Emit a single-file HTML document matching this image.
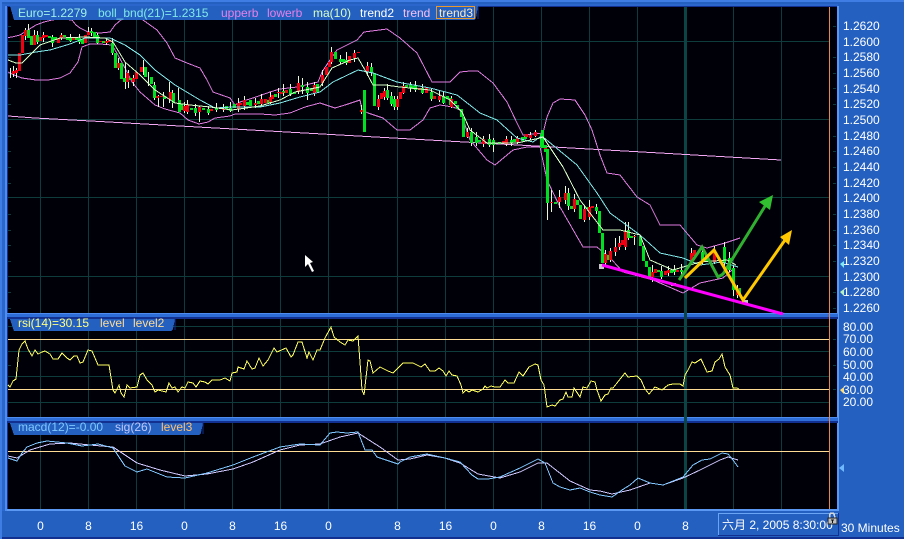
<!DOCTYPE html>
<html><head><meta charset="utf-8"><style>
html,body{margin:0;padding:0;background:#2460c0;width:904px;height:539px;overflow:hidden}
svg{display:block}
text{font-family:"Liberation Sans","Noto Sans CJK SC",sans-serif;font-size:12px}
.c{shape-rendering:crispEdges}
.l{fill:none;shape-rendering:crispEdges}
.a text{fill:#fff}
</style></head><body>
<svg width="904" height="539" viewBox="0 0 904 539" xmlns="http://www.w3.org/2000/svg">
<rect width="904" height="539" fill="#2460c0"/>
<g class="c">
<rect width="904" height="2" fill="#3f7de4"/>
<rect y="537" width="904" height="2" fill="#12308f"/>
<rect x="0" width="2" height="539" fill="#3f7de4"/>
<rect x="2" y="4" width="836" height="507" fill="#2a66cc"/>
<rect x="7" y="6" width="831" height="505" fill="#12308f"/>
<rect x="837" y="6" width="2" height="505" fill="#5a98f4"/>
<rect x="5" y="509" width="834" height="2" fill="#5a98f4"/>
<rect x="5" y="6" width="2" height="505" fill="#4f8cf0"/>
<rect x="8" y="7" width="829" height="306" fill="#000008"/>
<rect x="8" y="319" width="829" height="98" fill="#000008"/>
<rect x="8" y="423" width="829" height="86" fill="#000008"/>
<rect x="7" y="313" width="831" height="1" fill="#4f8cf0"/>
<rect x="7" y="314" width="831" height="3" fill="#2e6cd8"/>
<rect x="7" y="317" width="831" height="2" fill="#12308f"/>
<rect x="7" y="417" width="831" height="1" fill="#4f8cf0"/>
<rect x="7" y="418" width="831" height="3" fill="#2e6cd8"/>
<rect x="7" y="421" width="831" height="2" fill="#12308f"/>
</g>
<!-- grid -->
<path class="l" stroke="#0e3c3c" d="M40.5 7V313M88.5 7V313M136.5 7V313M184.5 7V313M232.5 7V313M280.5 7V313M328.5 7V313M397.5 7V313M445.5 7V313M493.5 7V313M541.5 7V313M589.5 7V313M637.5 7V313M733.5 7V313M781.5 7V313
M40.5 319V417M88.5 319V417M136.5 319V417M184.5 319V417M232.5 319V417M280.5 319V417M328.5 319V417M397.5 319V417M445.5 319V417M493.5 319V417M541.5 319V417M589.5 319V417M637.5 319V417M733.5 319V417M781.5 319V417
M40.5 423V509M88.5 423V509M136.5 423V509M184.5 423V509M232.5 423V509M280.5 423V509M328.5 423V509M397.5 423V509M445.5 423V509M493.5 423V509M541.5 423V509M589.5 423V509M637.5 423V509M733.5 423V509M781.5 423V509
M8 41.5H829M8 119.5H829M8 197.5H829M8 276.5H829M8 326.5H829M8 351.5H829M8 376.5H829M8 402.5H829
M8 26.5H11M8 57.5H11M8 73.5H11M8 88.5H11M8 104.5H11M8 136.5H11M8 151.5H11M8 167.5H11M8 183.5H11M8 214.5H11M8 230.5H11M8 245.5H11M8 261.5H11M8 292.5H11M8 308.5H11M8 339.5H11M8 365.5H11M8 389.5H11
M833 26.5H836M833 57.5H836M833 73.5H836M833 88.5H836M833 104.5H836M833 136.5H836M833 151.5H836M833 167.5H836M833 183.5H836M833 214.5H836M833 230.5H836M833 245.5H836M833 261.5H836M833 292.5H836M833 308.5H836M833 339.5H836M833 365.5H836M833 389.5H836"/>
<rect class="c" x="684" y="7" width="3" height="502" fill="#0a4444"/>
<rect class="c" x="829" y="7" width="1" height="502" fill="#e8854e"/>
<!-- level lines -->
<path class="l" stroke="#ffdc96" d="M8 339.5H829M8 389.5H829M8 451.5H829"/>
<!-- trend line -->
<polyline class="l" stroke="#f4a8f4" points="8,116 35,118 100,121.5 180,126 260,130.5 340,135 420,139.5 500,144 580,148.5 660,153 720,156.5 781,160"/>
<!-- upper band -->
<polyline class="l" stroke="#e07ce0" points="8,37.5 12,37 20,35 28,30 36,25 44,22 52,20 60,19 72,20 76,25 80,28 88,32 100,33 110,32 115,25 122,19 132,14 143,20 157,30 167,43 175,58 187,63 200,68 207,80 213,92 230,98 235,105 240,102 253,98 270,92 280,89 297,87 318,82 322,72 330,60 337,50 357,40 364,32 387,29 400,38 417,53 432,82 450,82 460,72 470,71 478,71 493,83 507,102 517,123 523,135 543,133 547,117 553,103 560,99 575,100 585,115 592,130 600,155 607,173 620,175 637,197 650,205 660,225 680,225 697,245 707,248 725,243 740,238"/>
<!-- lower band -->
<polyline class="l" stroke="#e07ce0" points="8,72 14,75 22,78 36,80 48,80 60,78 70,73 78,62 82,47 90,44 100,44 112,45 118,55 126,70 132,82 140,92 155,105 165,109 180,113 188,120 199,124 208,122 215,118 230,116 235,114 260,114 275,115 290,113 305,107 320,103 335,108 345,105 360,100 362,110 368,113 383,118 397,130 410,130 423,120 430,108 440,105 453,107 460,110 470,140 487,160 495,165 513,150 527,147 540,147 547,180 560,207 583,247 597,247 612,260 623,272 653,280 683,293 700,283 723,278 732,270"/>
<!-- wicks -->
<path class="l" stroke="#e6f8d8" transform="translate(.5 0)" d="M10 68V78M13 66V77M16 68V78M28 24V38M25 28V40M34 30V45M37 31V44M43 32V42M52 35V47M61 33V40M70 34V42M79 34V44M88 27V35M91 28V36M97 33V44M106 38V45M112 38V55M118 58V70M125 63V89M128 70V88M133 75V86M143 60V75M148 72V86M154 82V100M158 95V107M163 92V107M169 82V103M172 90V108M178 88V112M184 102V113M187 100V114M195 104V116M199 106V122M208 106V115M216 103V112M223 104V112M230 102V112M238 98V112M244 96V110M255 98V108M261 94V106M270 92V104M278 88V98M283 84V96M290 84V96M298 76V94M302 78V94M307 82V100M314 82V96M322 70V86M331 47V64M340 55V64M346 52V65M354 50V62M361 105V114M367 62V76M371 63V76M378 95V110M384 88V100M387 84V100M391 92V106M394 96V110M397 96V110M403 82V94M410 82V92M415 81V92M422 84V94M431 88V101M439 90V102M443 92V104M451 96V108M467 128V138M471 128V146M476 132V146M483 136V147M489 134V147M493 138V152M506 136V146M511 136V146M517 136V144M530 132V140M535 130V137M547 203V220M551 190V212M559 190V208M565 186V204M568 188V210M574 194V212M584 205V222M589 200V220M596 204V214M605 250V266M610 248V262M615 238V256M619 236V250M625 222V250M628 222V240M634 235V245M652 265V282M661 266V279M668 266V276M674 265V275M681 264V275M691 248V265M702 248V264M714 246V264M724 242V266M729 252V272M733 266V296M737 285V298"/>
<!-- green bodies -->
<path class="c" fill="none" stroke="#00e020" stroke-width="3" transform="translate(.5 0)" d="M28 30V38M31 36V45M37 35V42M49 36V38M52 37V43M64 35V37M67 37V40M70 38V41M76 38V40M79 38V42M82 39V44M91 31V33M94 32V38M97 35V43M103 41V43M112 43V53M115 53V68M121 63V79M124 78V82M130 78V80M145 67V77M151 77V84M154 85V98M164 96V99M173 93V103M179 100V112M191 108V110M195 108V113M203 108V110M208 109V113M216 108V110M230 108V111M250 100V106M268 100V103M283 91V93M290 89V94M294 92V94M302 85V87M307 87V93M317 84V92M335 52V59M340 59V62M346 60V63M364 90V132M371 67V73M374 73V106M387 90V98M391 96V104M394 99V107M410 85V88M415 85V90M422 88V93M431 92V99M443 96V103M450 98V105M457 105V109M461 109V117M463 117V137M471 132V143M476 137V143M489 139V145M493 140V145M511 140V143M522 137V141M541 134V147M545 145V152M547 149V203M542 130V148M555 202V204M568 193V206M571 206V209M577 200V205M580 205V219M587 207V209M596 207V211M599 211V233M602 233V263M607 255V260M628 230V238M631 236V238M640 236V246M643 246V261M646 261V267M649 267V277M658 270V272M661 271V277M671 270V273M674 269V272M681 270V272M702 252V260M706 256V262M724 247V263M729 258V270M733 268V290M739 288V295
M55 37V40M181 104V110M226 106V109M234 104V108M247 102V105M258 101V104M275 94V97M311 88V91M343 59V62M406 85V87M412 86V89M447 96V99M455 101V104M479 140V142M499 142V144M514 139V142M525 136V139"/>
<!-- red bodies -->
<path class="c" fill="none" stroke="#f00010" stroke-width="3" transform="translate(.5 0)" d="M13 71V74M16 70V73M19 53V71M22 35V53M25 30V36M34 35V45M40 37V41M43 35V38M58 38V43M61 35V38M73 37V40M85 35V43M88 32V35M100 41V42M106 41V43M109 40V42M118 63V68M127 73V82M133 78V82M136 72V79M141 67V72M157 96V98M161 96V97M170 92V100M184 106V111M187 104V112M199 107V112M211 109V111M223 109V110M238 103V109M240 103V105M244 100V106M255 103V105M261 99V104M265 99V103M270 97V102M272 95V99M278 92V93M286 90V93M298 83V92M314 85V93M322 75V83M326 67V75M329 62V67M331 52V62M349 56V63M354 53V58M358 52V53M361 110V112M367 66V72M378 99V107M381 93V99M384 91V97M397 99V107M400 92V99M403 86V93M419 88V90M426 87V93M434 96V99M439 96V100M451 99V107M467 132V137M483 139V144M503 141V143M506 139V144M517 138V142M530 135V138M535 132V136M545 148V149M551 202V203M559 197V202M565 193V200M574 199V209M584 209V220M589 207V217M592 206V208M605 254V263M610 251V260M615 247V252M619 243V247M622 240V245M625 231V247M634 236V237M652 272V277M655 269V273M665 271V275M668 270V273M691 253V262M694 250V256M714 252V262M737 288V295
M46 35V37M220 107V109M281 92V94M526 134V137M677 270V272"/>
<!-- cyan mid -->
<polyline class="l" stroke="#80e8e8" points="8,55 20,55 36,52 50,50 70,44 85,38 110,38 125,45 140,55 155,70 175,85 200,100 215,108 233,107 260,107 280,103 300,97 320,92 333,82 358,70 373,73 397,82 430,88 457,95 480,113 497,120 517,138 533,142 540,137 543,137 577,165 597,193 610,213 640,235 660,253 683,258 700,265 722,262 738,267"/>
<!-- MA -->
<polyline class="l" stroke="#d8ffc8" points="8,60 16,63 22,63 40,45 60,38 85,37 105,38 113,42 125,62 140,75 155,90 175,103 190,105 210,107 232,110 260,106 280,100 295,92 320,87 332,68 350,60 358,58 365,70 373,85 385,85 400,87 430,90 450,100 462,112 470,130 487,143 517,143 540,138 543,137 563,167 580,200 603,230 620,230 640,235 650,260 673,270 700,262 727,260 736,265"/>
<!-- marks -->
<g class="c" fill="#c8c8c8"><rect x="599" y="264" width="5" height="5"/><rect x="671" y="283" width="5" height="3"/><rect x="743" y="300" width="5" height="3"/></g>
<!-- magenta -->
<path d="M602 265L783 314" stroke="#ff00ff" stroke-width="3" fill="none"/>
<!-- green trend -->
<path d="M679 280L702 247L718 277L723 274L767 203" stroke="#30b030" stroke-width="3" fill="none"/>
<polygon points="773,195 759,202 770,210" fill="#30c030"/>
<!-- yellow trend -->
<path d="M685 278L714 250L743 300L785 240" stroke="#ffc800" stroke-width="3" fill="none"/>
<polygon points="792,230 780,237 789,245" fill="#ffc800"/>
<!-- rsi -->
<polyline class="l" stroke="#ffff60" points="8,385 10,387 13,381 16,379 19,350 22,344 25,341 28,349 32,356 35,350 38,354 42,352 45,351 50,354 53,359 58,359 62,353 67,358 70,360 74,356 77,356 80,363 83,362 88,350 92,351 95,358 98,365 109,365 113,390 115,393 119,385 121,393 124,397 127,385 130,388 137,387 140,375 143,373 147,380 152,385 155,392 158,390 166,392 169,383 172,388 175,387 178,392 182,387 185,388 188,382 193,383 196,387 200,381 205,382 208,384 212,380 220,380 225,378 230,381 232,373 237,372 238,367 244,369 247,361 252,369 255,368 259,358 263,366 268,360 274,348 277,352 286,348 291,357 293,355 298,342 302,342 307,358 309,352 313,360 317,350 320,350 325,338 331,327 334,337 340,342 345,345 348,340 353,341 358,336 360,362 362,390 364,395 368,360 370,361 373,373 380,367 388,371 393,373 399,367 403,363 413,363 421,367 425,364 430,371 435,371 439,368 443,371 446,376 449,371 452,375 457,376 461,385 463,393 466,390 469,392 472,390 478,392 483,389 485,386 487,388 491,386 495,387 500,387 505,380 508,383 514,383 519,372 523,376 529,367 535,364 538,365 541,380 544,385 547,407 552,405 555,406 560,400 563,399 566,392 568,397 572,397 574,388 580,397 583,387 587,388 591,381 595,382 597,390 601,401 605,395 608,394 611,388 613,388 625,373 628,377 637,376 641,380 645,389 649,394 655,387 662,390 668,385 673,384 680,384 683,386 685,375 688,370 692,362 695,363 701,359 707,372 712,371 715,362 719,359 722,354 725,367 730,375 733,388 737,388 739,389"/>
<!-- macd -->
<polyline class="l" stroke="#d0c8ff" points="8,456 17,458 30,450 50,444 70,443 90,445 113,447 125,455 137,463 160,470 185,476 207,474 233,469 253,462 280,450 300,445 320,444 340,437 358,433 380,447 398,460 410,459 427,455 445,458 460,463 478,474 500,478 520,472 538,463 547,463 570,481 590,490 600,491 612,494 630,490 650,483 663,485 683,478 700,470 720,460 728,457 738,460"/>
<polyline class="l" stroke="#80c8ff" points="8,458 17,461 22,453 27,447 37,443 47,441 67,443 82,446 98,444 113,448 125,466 137,472 147,469 167,477 185,478 207,473 233,465 253,457 280,447 300,444 320,445 330,433 337,432 347,433 358,432 365,450 372,450 377,457 398,464 400,462 410,457 427,454 445,458 460,462 472,475 478,479 488,479 500,477 520,468 538,459 545,463 553,483 560,487 570,490 580,488 590,492 600,495 612,497 622,490 630,485 638,478 650,483 663,485 683,477 693,465 702,460 710,459 722,453 728,454 733,460 738,467"/>
<!-- tabs -->
<g class="c">
<polygon points="10,6 478,6 476,18 474,20 14,20" fill="#2460c0"/>
<polygon points="10,319 175,319 173,329 171,331 14,331" fill="#2460c0"/>
<polygon points="10,423 203,423 201,433 199,435 14,435" fill="#2460c0"/>
<path d="M478 7V19M175 319V330M203 423V434" stroke="#12308f" fill="none"/>
<rect x="436.500" y="6.500" width="38" height="12" fill="none" stroke="#e89a30"/>
</g>
<text x="18" y="17" fill="#a0f0e8">Euro=1.2279</text>
<text x="98" y="17" fill="#80e8e8">boll_bnd(21)=1.2315</text>
<text x="221" y="17" fill="#e880e8">upperb</text>
<text x="267" y="17" fill="#e880e8">lowerb</text>
<text x="313" y="17" fill="#d8ffc8">ma(10)</text>
<text x="360" y="17" fill="#ffffff">trend2</text>
<text x="403" y="17" fill="#f8c0f8">trend</text>
<text x="439" y="17" fill="#ffe8c0">trend3</text>
<text x="18" y="327" fill="#ffff80">rsi(14)=30.15</text>
<text x="100" y="327" fill="#ffdc96">level</text>
<text x="133" y="327" fill="#ffdc96">level2</text>
<text x="18" y="431" fill="#80c8ff">macd(12)=-0.00</text>
<text x="115" y="431" fill="#c0c8ff">sig(26)</text>
<text x="161" y="431" fill="#ffc070">level3</text>
<!-- axis labels -->
<g class="a">
<text x="843" y="30">1.2620</text><text x="843" y="46">1.2600</text><text x="843" y="61">1.2580</text><text x="843" y="77">1.2560</text><text x="843" y="93">1.2540</text><text x="843" y="108">1.2520</text><text x="843" y="124">1.2500</text><text x="843" y="140">1.2480</text><text x="843" y="155">1.2460</text><text x="843" y="171">1.2440</text><text x="843" y="187">1.2420</text><text x="843" y="202">1.2400</text><text x="843" y="218">1.2380</text><text x="843" y="234">1.2360</text><text x="843" y="249">1.2340</text><text x="843" y="265">1.2320</text><text x="843" y="281">1.2300</text><text x="843" y="296">1.2280</text><text x="843" y="312">1.2260</text>
<text x="843" y="331">80.00</text><text x="843" y="343">70.00</text><text x="843" y="356">60.00</text><text x="843" y="369">50.00</text><text x="843" y="381">40.00</text><text x="843" y="394">30.00</text><text x="843" y="406">20.00</text>
<g text-anchor="middle"><text x="40.500" y="530">0</text><text x="88.500" y="530">8</text><text x="136.500" y="530">16</text><text x="184.500" y="530">0</text><text x="232.500" y="530">8</text><text x="280.500" y="530">16</text><text x="328.500" y="530">0</text><text x="397.500" y="530">8</text><text x="445.500" y="530">16</text><text x="493.500" y="530">0</text><text x="541.500" y="530">8</text><text x="589.500" y="530">16</text><text x="637.500" y="530">0</text><text x="685.500" y="530">8</text></g>
</g>
<!-- markers -->
<polygon points="840,264 844,261 844,268" fill="#80e8f0"/>
<polygon points="840,292 844,289 844,296" fill="#b8f0c0"/>
<polygon points="840,390 844,387 844,394" fill="#ffe080"/>
<polygon points="839,468 844,464 844,472" fill="#70b8ff"/>
<!-- date box -->
<rect class="c" x="718" y="513" width="120" height="22" fill="#2460c0"/>
<path class="l" stroke="#6aa4f4" d="M718.500 535V513.500H838"/>
<path class="l" stroke="#12308f" d="M718 535.500H838.500V513"/>
<text x="722" y="529" fill="#fff">六月 2, 2005 8:30:00</text>
<text x="841" y="532" fill="#fff">30 Minutes</text>
<!-- lock -->
<g class="c">
<path d="M829.500 519V516Q829.500 513 832 513Q834.500 513 834.500 516V519" fill="none" stroke="#d8d8d8" stroke-width="1.500"/>
<rect x="828" y="518" width="9" height="6" fill="#c0c0c0" stroke="#202020" stroke-width="1"/>
<path d="M831 520H834M832.500 520V523" stroke="#101010"/>
</g>
<!-- cursor -->
<polygon points="305,255 305,267 308,264 312,272 314,271 310,263 313,262" fill="#fff"/>
</svg>
</body></html>
